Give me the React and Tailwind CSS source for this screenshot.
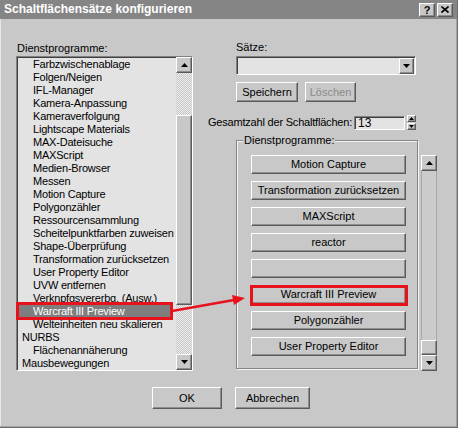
import React from "react";

// classic 3D bevels
const raised =
  "border border-t-white border-l-white border-r-[#5a5a5a] border-b-[#5a5a5a] shadow-[inset_-1px_-1px_0_#8e8e8e] bg-[#c8c8c8]";
const sunken =
  "border border-t-[#808080] border-l-[#808080] border-r-white border-b-white shadow-[inset_1px_1px_0_#404040]";
const dither =
  "bg-[repeating-conic-gradient(#ececec_0_25%,#c8c8c8_0_50%)] bg-[length:2px_2px]";

const tree = [
  ["Farbzwischenablage", 1],
  ["Folgen/Neigen", 1],
  ["IFL-Manager", 1],
  ["Kamera-Anpassung", 1],
  ["Kameraverfolgung", 1],
  ["Lightscape Materials", 1],
  ["MAX-Dateisuche", 1],
  ["MAXScript", 1],
  ["Medien-Browser", 1],
  ["Messen", 1],
  ["Motion Capture", 1],
  ["Polygonzähler", 1],
  ["Ressourcensammlung", 1],
  ["Scheitelpunktfarben zuweisen", 1],
  ["Shape-Überprüfung", 1],
  ["Transformation zurücksetzen", 1],
  ["User Property Editor", 1],
  ["UVW entfernen", 1],
  ["Verknpfgsvererbg. (Ausw.)", 1],
  ["Warcraft III Preview", 1, true],
  ["Welteinheiten neu skalieren", 1],
  ["NURBS", 0],
  ["Flächenannäherung", 1],
  ["Mausbewegungen", 0],
];

const setButtons = [
  "Motion Capture",
  "Transformation zurücksetzen",
  "MAXScript",
  "reactor",
  "",
  "Warcraft III Preview",
  "Polygonzähler",
  "User Property Editor",
];

function Arrow({ up, small }) {
  const w = small ? 5 : 7;
  const h = small ? 3 : 4;
  return (
    <svg width={w} height={h} viewBox={`0 0 ${w} ${h}`}>
      <polygon
        points={up ? `${w / 2},0 ${w},${h} 0,${h}` : `0,0 ${w},0 ${w / 2},${h}`}
        fill="#000"
      />
    </svg>
  );
}

function ScrollButton({ up }) {
  return (
    <div className={`${raised} h-[16px] w-[16px] flex items-center justify-center`}>
      <Arrow up={up} />
    </div>
  );
}

function Button({ children, className = "", disabled }) {
  return (
    <div
      className={`${raised} ${className} flex items-center justify-center ${
        disabled ? "text-[#8a8a8a]" : "text-black"
      }`}
    >
      {children}
    </div>
  );
}

export default function App() {
  return (
    <div className="relative w-[458px] h-[428px] bg-[#c8c8c8] border-r border-b border-[#6e6e6e] shadow-[inset_-1px_-1px_0_#a4a4a4,inset_1px_0_0_#e6e6e6] flex flex-col font-['Liberation_Sans',Arial,sans-serif] text-[11px] leading-[13px] text-black overflow-hidden">
      {/* title bar */}
      <div className="h-[19px] bg-[#858585] flex items-center justify-between pl-[4px] pr-[4px]">
        <span className="text-white font-bold text-[12px] leading-[19px]">
          Schaltflächensätze konfigurieren
        </span>
        <div className="flex gap-[2px]">
          <div className={`${raised} w-[16px] h-[14px] flex items-center justify-center font-bold text-[11px] leading-[12px]`}>
            ?
          </div>
          <div className={`${raised} w-[16px] h-[14px] flex items-center justify-center`}>
            <svg width="8" height="7" viewBox="0 0 8 7">
              <path d="M0.5 0.5 L7.5 6.5 M7.5 0.5 L0.5 6.5" stroke="#000" strokeWidth="1.6" />
            </svg>
          </div>
        </div>
      </div>

      <div className="h-[352px] flex">
        {/* utilities tree */}
        <div className="pl-[16px] pt-[23px] flex flex-col">
          <div className="pl-[1px] h-[13px]">Dienstprogramme:</div>
          <div className={`${sunken} mt-[1px] w-[177px] h-[315px] bg-[#e3e3e3] flex`}>
            <div className="flex-1 overflow-hidden pt-[1px]">
              {tree.map(([label, level, selected]) => (
                <div
                  key={label}
                  className={`h-[13px] whitespace-nowrap tracking-[-0.2px] ${
                    level ? "pl-[16px]" : "pl-[5px]"
                  } ${selected ? "bg-[#7e7e7e] text-white mr-[3px]" : ""}`}
                >
                  {label}
                </div>
              ))}
            </div>
            <div className="w-[16px] flex flex-col">
              <ScrollButton up />
              <div className={`flex-1 flex flex-col ${dither}`}>
                <div className="h-[42px]" />
                <div className={`${raised} h-[190px]`} />
              </div>
              <ScrollButton />
            </div>
          </div>
        </div>

        {/* button sets */}
        <div className="ml-[12px] w-[232px] pt-[22px] flex flex-col">
          <div className="pl-[31px] h-[13px]">Sätze:</div>
          <div className={`${sunken} ml-[31px] mt-[2px] w-[180px] h-[20px] bg-[#e3e3e3] flex items-center justify-end pr-[1px]`}>
            <div className={`${raised} w-[15px] h-[16px] flex items-center justify-center`}>
              <Arrow />
            </div>
          </div>
          <div className="ml-[31px] mt-[7px] flex gap-[7px]">
            <Button className="w-[62px] h-[20px]">Speichern</Button>
            <Button className="w-[51px] h-[20px]" disabled>
              Löschen
            </Button>
          </div>
          <div className="mt-[13px] h-[15px] flex items-center justify-end pr-[21px] gap-[2px]">
            <span className="whitespace-nowrap tracking-[-0.2px]">Gesamtzahl der Schaltflächen:</span>
            <div className={`${sunken} w-[51px] h-[14px] bg-[#e3e3e3] pl-[3px] text-[12px] leading-[12px]`}>
              13
            </div>
            <div className="w-[9px] h-[15px] flex flex-col gap-[1px]">
              <div className={`${raised} h-[7px] flex items-center justify-center`}>
                <Arrow up small />
              </div>
              <div className={`${raised} h-[7px] flex items-center justify-center`}>
                <Arrow small />
              </div>
            </div>
          </div>
          <div className="mt-[10px] flex">
            <div className="relative ml-[31px] w-[182px] h-[229px] border border-[#858585] shadow-[1px_1px_0_#f4f4f4,inset_1px_1px_0_#f4f4f4] pt-[14px] pl-[14px] flex flex-col gap-[7px]">
              <span className="absolute -top-[7px] left-[6px] bg-[#c8c8c8] px-[1px]">
                Dienstprogramme:
              </span>
              {setButtons.map((label, i) => (
                <Button key={i} className="w-[155px] h-[19px] whitespace-nowrap">
                  {label}
                </Button>
              ))}
            </div>
            <div className="ml-[3px] mt-[15px] w-[16px] h-[216px] flex flex-col">
              <ScrollButton up />
              <div className="flex-1 flex flex-col justify-end bg-[#cbcbcb] border-x border-[#a9a9a9]">
                <div className={`${raised} h-[15px] -mx-[1px]`} />
              </div>
              <ScrollButton />
            </div>
          </div>
        </div>
      </div>

      {/* dialog buttons */}
      <div className="pt-[16px] pl-[152px] flex gap-[13px]">
        <Button className="w-[70px] h-[22px]">OK</Button>
        <Button className="w-[75px] h-[22px]">Abbrechen</Button>
      </div>

      {/* red markers */}
      <div className="absolute left-[16px] top-[302px] w-[157px] h-[18px] border-[3px] border-[#e8121c]" />
      <div className="absolute left-[250px] top-[285px] w-[158px] h-[21px] border-[3px] border-[#e8121c]" />
      <svg className="absolute left-0 top-0" width="458" height="428" viewBox="0 0 458 428">
        <line x1="172" y1="311" x2="234" y2="300" stroke="#e8121c" strokeWidth="2.5" />
        <polygon points="245,298 234,305 232,295" fill="#e8121c" />
      </svg>
    </div>
  );
}
